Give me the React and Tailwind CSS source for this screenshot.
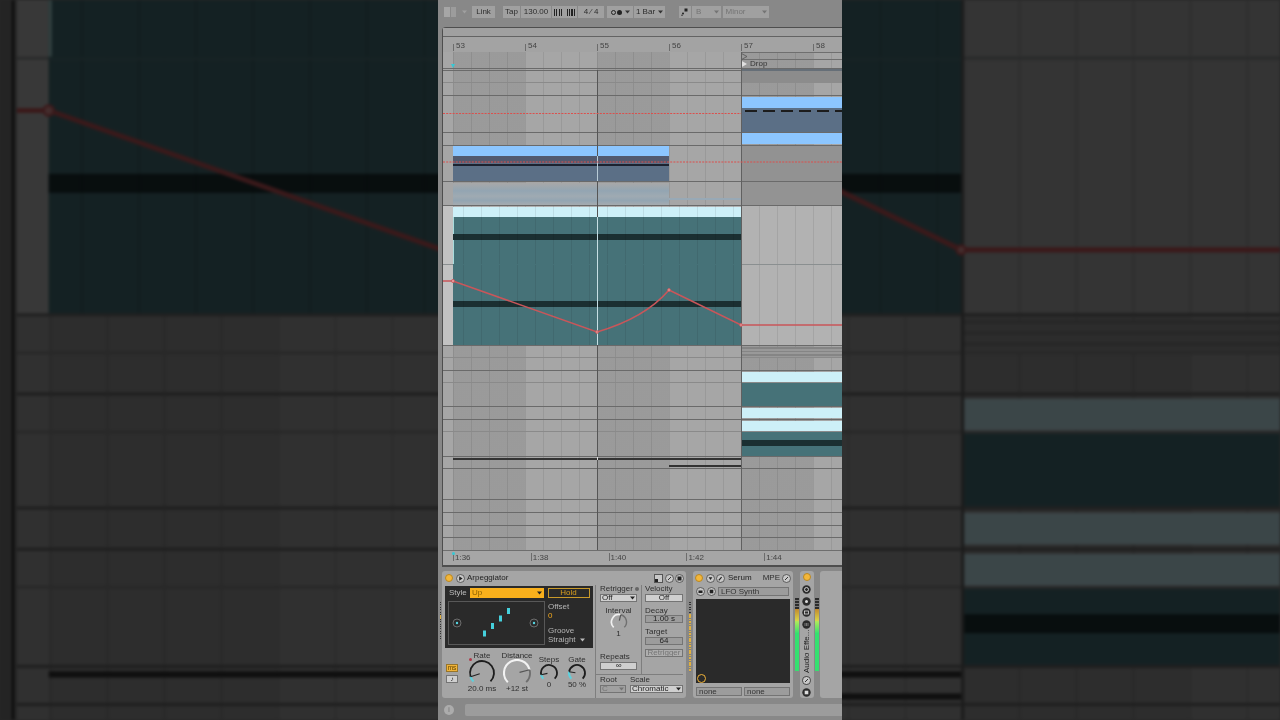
import React from "react";

const gridBg =
  "bg-[image:repeating-linear-gradient(90deg,transparent_0,transparent_10px,rgba(0,0,0,0.08)_10px,rgba(0,0,0,0.08)_11px,transparent_11px,transparent_18px),repeating-linear-gradient(90deg,transparent_0,transparent_10px,rgba(0,0,0,0.07)_10px,rgba(0,0,0,0.07)_82px,transparent_82px,transparent_144px)]";
const plainGrid =
  "bg-[image:repeating-linear-gradient(90deg,transparent_0,transparent_10px,rgba(0,0,0,0.08)_10px,rgba(0,0,0,0.08)_11px,transparent_11px,transparent_18px)]";

const S = "border-b border-[#6a6a6a]";
const L = "border-b border-[#8a8a8a]";

function Clip({ x, w, y, h, c }) {
  return <div className={`absolute ${c}`} style={{ left: x, width: w, top: y, height: h }} />;
}

const BLUE = "bg-[#8cc6ff]";
const SLATE = "bg-[#5b6f86]";
const ICE = "bg-[#cdf0f8]";
const TEAL = "bg-[#467278]";
const DARK = "bg-[#1b2f31]";

function Row({ h, line = S, light, children }) {
  return (
    <div className={`relative ${line} ${light ? `bg-[#b2b2b2] ${plainGrid}` : ""}`} style={{ height: h }}>
      {children}
    </div>
  );
}

function Rows({ backdrop }) {
  return (
    <div className={`relative w-[399px] h-[498px] bg-[#a6a6a6] ${gridBg}`}>
      <Row h={17}>
        <div className="absolute left-[298px] right-0 top-0 h-[8px] border-t border-b border-[#6f6f6f]" />
        <svg className="absolute left-[298px] top-[1px]" width="7" height="7" viewBox="0 0 7 7">
          <path d="M0.5 0.5L6 3.5L0.5 6.5Z" fill="none" stroke="#555" strokeWidth="0.8" />
        </svg>
        <svg className="absolute left-[298px] top-[8px]" width="7" height="8" viewBox="0 0 7 8">
          <path d="M0 0.5L6 4L0 7.5Z" fill="#e0e0e0" />
        </svg>
        {!backdrop && (
          <span className="absolute left-[307px] top-[7px] text-[8px] leading-[9px] text-[#333]">Drop</span>
        )}
        <div className="absolute left-[10px] top-[12px] w-0 h-0 -ml-[2px] border-l-[2.5px] border-r-[2.5px] border-t-[4px] border-l-transparent border-r-transparent border-t-[#35c9d6]" />
      </Row>
      <Row h={2}>
        <Clip x={298} w={101} y={0} h={2} c="bg-[#666f78]" />
      </Row>
      <Row h={12} line={L}>
        <Clip x={298} w={101} y={0} h={12} c="bg-[#8c8c8c]" />
      </Row>
      <Row h={13} />
      <Row h={37}>
        <Clip x={298} w={101} y={1} h={11} c={BLUE} />
        <Clip x={298} w={101} y={12} h={24} c={SLATE} />
        <div className="absolute left-[302px] right-0 top-[14px] h-[2px] bg-[repeating-linear-gradient(90deg,#1c1c1c_0,#1c1c1c_12px,transparent_12px,transparent_18px)]" />
      </Row>
      <Row h={13}>
        <Clip x={298} w={101} y={0} h={11} c={BLUE} />
      </Row>
      <Row h={36}>
        <Clip x={10} w={216} y={0} h={10} c={BLUE} />
        <Clip x={10} w={216} y={10} h={25} c={SLATE} />
        <Clip x={10} w={216} y={10} h={7} c="bg-[#525a6f]" />
        <Clip x={10} w={216} y={18} h={1.5} c="bg-[#1c2230]" />
        <Clip x={298} w={101} y={0} h={35} c="bg-[#929292]" />
      </Row>
      <Row h={24}>
        <Clip x={10} w={216} y={1} h={22} c="bg-[linear-gradient(180deg,#a8a8a8_0%,#93a5b2_35%,#9faab2_60%,#93a5b2_80%,#a5abaf_100%)]" />
        <Clip x={226} w={72} y={16} h={2} c="bg-[#98a9b6]" />
        <Clip x={298} w={101} y={0} h={23} c="bg-[#939393]" />
      </Row>
      <Row h={59} light line="border-b border-[#8a8f90]">
        <Clip x={0} w={10} y={0} h={58} c="bg-[#c2c2c2]" />
        <Clip x={10} w={288} y={1} h={10} c={ICE} />
        <Clip x={10} w={288} y={11} h={48} c={TEAL} />
        <Clip x={10} w={1} y={11} h={47} c="bg-[#a8dcdc]" />
        <Clip x={10} w={288} y={28} h={6} c={DARK} />
        <div className={`absolute left-[10px] w-[288px] top-0 h-full ${plainGrid}`} />
      </Row>
      <Row h={81} light>
        <Clip x={0} w={10} y={0} h={80} c="bg-[#c2c2c2]" />
        <Clip x={10} w={288} y={0} h={80} c={TEAL} />
        <Clip x={10} w={288} y={36} h={6} c={DARK} />
        <div className={`absolute left-[10px] w-[288px] top-0 h-[80px] ${plainGrid}`} />
      </Row>
      <Row h={12} line={L}>
        <Clip x={298} w={101} y={1} h={10} c="bg-[repeating-linear-gradient(180deg,#858585_0,#858585_1.5px,#999999_1.5px,#999999_3.5px)]" />
      </Row>
      <Row h={13} />
      <Row h={12} line={L}>
        <Clip x={298} w={101} y={1} h={10} c={ICE} />
      </Row>
      <Row h={24}>
        <Clip x={298} w={101} y={0} h={23} c={TEAL} />
      </Row>
      <Row h={13}>
        <Clip x={298} w={101} y={1} h={10} c={ICE} />
      </Row>
      <Row h={12} line={L}>
        <Clip x={298} w={101} y={1} h={10} c={ICE} />
      </Row>
      <Row h={25}>
        <Clip x={298} w={101} y={0} h={24} c={TEAL} />
        <Clip x={298} w={101} y={8} h={6} c={DARK} />
      </Row>
      <Row h={12}>
        <Clip x={10} w={288} y={1} h={2} c="bg-[#333]" />
        <Clip x={226} w={72} y={8} h={2} c="bg-[#333]" />
      </Row>
      <Row h={31} />
      <Row h={13} />
      <Row h={13} />
      <Row h={12} />
      <Row h={12} line="" />

      <div className="absolute left-[154px] top-[18px] bottom-0 w-px bg-[#555]" />
      <div className="absolute left-[298px] top-0 bottom-0 w-px bg-[#606060]" />
      <div className="absolute left-[154px] top-[104px] h-[25px] w-px bg-[#b8cbd6]" />
      <div className="absolute left-[154px] top-[165px] h-[128px] w-px bg-[#c6dfe4]" />
      <div className="absolute left-[154px] top-[405px] h-[3px] w-px bg-[#dddddd]" />

      <svg className="absolute left-0 top-0" width="399" height="498" viewBox="0 0 399 498" fill="none">
        <path d="M0 61.5H298" stroke="#dc4f4c" strokeWidth="1" strokeDasharray="2 1.2" />
        <path d="M0 110H399" stroke="#dc4f4c" strokeWidth="1" strokeDasharray="2 1.2" />
        <path d="M0 229H10L154 280Q202 266 226 238L298 273H399" stroke="#c9565a" strokeWidth="1.6" />
        <circle cx="10" cy="229" r="1.6" fill="#e79a9a" stroke="#c9565a" strokeWidth="0.8" />
        <circle cx="154" cy="280" r="1.4" fill="#e79a9a" stroke="#c9565a" strokeWidth="0.8" />
        <circle cx="226" cy="238" r="1.4" fill="#e79a9a" stroke="#c9565a" strokeWidth="0.8" />
        <circle cx="298" cy="273" r="1.4" fill="#e79a9a" stroke="#c9565a" strokeWidth="0.8" />
      </svg>
    </div>
  );
}

function TopBtn({ w, ml = 0, children, dim }) {
  return (
    <div
      className={`h-[12px] flex items-center justify-center shrink-0 bg-[#a0a0a0] text-[8px] ${dim ? "text-[#747474]" : "text-[#2c2c2c]"}`}
      style={{ width: w, marginLeft: ml }}
    >
      {children}
    </div>
  );
}

function Caret({ c = "#333", className = "" }) {
  return (
    <svg className={className} width="5" height="4" viewBox="0 0 5 4">
      <path d="M0 0.5H5L2.5 3.5Z" fill={c} />
    </svg>
  );
}

function TopBar() {
  return (
    <div className="h-[27px] flex items-center pl-[6px] pb-[3px]">
      <div className="w-[12px] h-[10px] flex gap-px shrink-0">
        <div className="flex-1 bg-[#a6a6a6]" />
        <div className="flex-1 bg-[#9c9c9c]" />
      </div>
      <Caret c="#a0a0a0" className="ml-[6px] shrink-0" />
      <TopBtn w={23} ml={5}>Link</TopBtn>
      <TopBtn w={17} ml={8}>Tap</TopBtn>
      <TopBtn w={30} ml={1}>130.00</TopBtn>
      <TopBtn w={13} ml={0.5}>
        <div className="w-[8px] h-[7px] bg-[repeating-linear-gradient(90deg,#222_0,#222_1px,transparent_1px,transparent_2.4px)]" />
      </TopBtn>
      <TopBtn w={12} ml={0.5}>
        <div className="w-[8px] h-[7px] bg-[repeating-linear-gradient(90deg,#222_0,#222_1px,transparent_1px,transparent_1.8px)]" />
      </TopBtn>
      <TopBtn w={26} ml={1}>4 ⁄ 4</TopBtn>
      <TopBtn w={26} ml={3}>
        <div className="w-[5px] h-[5px] rounded-full border border-[#222]" />
        <div className="w-[5px] h-[5px] rounded-full bg-[#222] ml-px" />
        <Caret className="ml-[3px]" />
      </TopBtn>
      <TopBtn w={31} ml={1}>
        1 Bar <Caret className="ml-[3px]" />
      </TopBtn>
      <TopBtn w={12} ml={14}>
        <svg width="8" height="8" viewBox="0 0 8 8">
          <rect x="3.5" y="0.5" width="3" height="3" fill="#222" />
          <circle cx="2" cy="5.5" r="1" fill="#222" />
          <circle cx="1" cy="7.2" r="0.7" fill="#222" />
        </svg>
      </TopBtn>
      <TopBtn w={29} ml={1} dim>
        <span className="mr-auto pl-[4px]">B</span>
        <Caret c="#747474" className="mr-[2px]" />
      </TopBtn>
      <TopBtn w={46} ml={1.5} dim>
        <span className="mr-auto pl-[3px]">Minor</span>
        <Caret c="#747474" className="mr-[2px]" />
      </TopBtn>
    </div>
  );
}

function Arrangement() {
  const bars = ["53", "54", "55", "56", "57", "58"];
  const times = ["1:36", "1:38", "1:40", "1:42", "1:44"];
  return (
    <div className="ml-[4px] h-[540px] border-l border-t border-b-2 border-[#4e4e4e] rounded-tl-[4px] bg-[#a6a6a6] flex flex-col">
      <div className="h-[9px] border-b border-[#636363] bg-[#a0a0a0]" />
      <div className="h-[15px] flex pl-[10px] items-end bg-[#a3a3a3]">
        {bars.map((b) => (
          <div key={b} className="w-[72px] shrink-0 h-[7px] border-l border-[#6c6c6c] pl-[2px] text-[8px] leading-[7px] text-[#444] mb-[1px]">
            <span className="relative -top-[2px]">{b}</span>
          </div>
        ))}
      </div>
      <Rows />
      <div className="relative flex-1 flex pl-[10px] bg-[#a6a6a6] border-t border-[#6e6e6e]">
        {times.map((t) => (
          <div key={t} className="w-[77.8px] shrink-0 h-[8px] mt-[2px] border-l border-[#6c6c6c] pl-[1px] text-[8px] leading-[9px] text-[#444]">
            {t}
          </div>
        ))}
        <div className="absolute left-[9px] top-[1px] w-[3px] h-[3px] rounded-full bg-[#35c9d6]" />
      </div>
    </div>
  );
}

function arc(c, r, a0, a1) {
  const p = (a) => [c + r * Math.cos((a * Math.PI) / 180), c + r * Math.sin((a * Math.PI) / 180)];
  const [x0, y0] = p(a0);
  const [x1, y1] = p(a1);
  return `M${x0} ${y0}A${r} ${r} 0 ${a1 - a0 > 180 ? 1 : 0} 1 ${x1} ${y1}`;
}

function Knob({ size, r, v, track = "#1d1d1d", fill = "#5fd0dc", needle = "#222", sw = 1.8 }) {
  const c = size / 2;
  const a = 135 + 270 * v;
  const rad = (a * Math.PI) / 180;
  return (
    <svg width={size} height={size} viewBox={`0 0 ${size} ${size}`} fill="none" className="shrink-0 -mt-px">
      <path d={arc(c, r, a, 405)} stroke={track} strokeWidth={sw} />
      <path d={arc(c, r, 135, a)} stroke={fill} strokeWidth={sw + 0.3} />
      <path d={`M${c + r * Math.cos(rad)} ${c + r * Math.sin(rad)}L${c + r * 0.2 * Math.cos(rad)} ${c + r * 0.2 * Math.sin(rad)}`} stroke={needle} strokeWidth="1.2" />
    </svg>
  );
}

const lab = "h-[8px] leading-[8px] text-[8px] text-[#2f2f2f] whitespace-nowrap";

function Field({ w, mt = 0, children, tone = "bg-[#cfcfcf] text-[#222]" }) {
  return (
    <div className={`h-[8px] flex items-center justify-center text-[8px] border border-[#747474] ${tone}`} style={{ width: w, marginTop: mt }}>
      {children}
    </div>
  );
}

function HeadIcon({ children, ml = 0, size = 9 }) {
  return (
    <svg width={size} height={size} viewBox="0 0 9 9" className="shrink-0" style={{ marginLeft: ml }}>
      <circle cx="4.5" cy="4.5" r="4" fill="#c8c8c8" stroke="#444" strokeWidth="0.8" />
      {children}
    </svg>
  );
}

function Power({ ml = 0 }) {
  return <div className="w-[8px] h-[8px] rounded-full bg-[#f4b73a] border border-[#b98722] shrink-0" style={{ marginLeft: ml }} />;
}

function KnobCol({ w, ml, label, value, top, children, dot }) {
  return (
    <div className="relative shrink-0 flex flex-col items-center" style={{ width: w, marginLeft: ml, paddingTop: top }}>
      <div className={lab}>{label}</div>
      {children}
      <div className={`${lab} -mt-[2px]`}>{value}</div>
      {dot}
    </div>
  );
}

function Arpeggiator() {
  return (
    <div className="w-[244px] h-[127px] shrink-0 rounded-[3px] bg-[#a5a5a5] flex flex-col">
      <div className="h-[14px] flex items-center pl-[3px] pr-[2px]">
        <Power />
        <HeadIcon ml={3}><path d="M3.2 2.3L6.6 4.5L3.2 6.7Z" fill="#222" /></HeadIcon>
        <span className="ml-[2px] text-[8px] font-medium text-[#222]">Arpeggiator</span>
        <div className="ml-auto w-[9px] h-[9px] bg-[#c8c8c8] border border-[#555] shrink-0 flex items-end">
          <div className="w-[3px] h-[3px] bg-[#222]" />
        </div>
        <HeadIcon ml={2}><path d="M3 6L6 3" stroke="#333" strokeWidth="1" /></HeadIcon>
        <HeadIcon ml={1}><rect x="2.5" y="2.5" width="4" height="4" fill="#222" /></HeadIcon>
      </div>
      <div className="flex flex-1">
        <div className="w-[148px] ml-[3px] shrink-0 flex flex-col">
          <div className="h-[62px] mt-[1px] bg-[#2a2a2a] flex flex-col">
            <div className="flex items-center mt-[2px] h-[10px]">
              <span className="w-[25px] pl-[4px] text-[8px] text-[#bdbdbd] shrink-0">Style</span>
              <div className="w-[74px] h-[10px] bg-[#f9b01c] flex items-center pl-[2px] pr-[2px] text-[8px] text-[#8a5f00] shrink-0">
                <span className="mr-auto">Up</span>
                <Caret c="#222" />
              </div>
              <div className="ml-[3.5px] w-[42px] h-[10px] border border-[#c99a2a] flex items-center justify-center text-[8px] text-[#d99f1e] shrink-0">Hold</div>
            </div>
            <div className="flex mt-[3px]">
              <svg className="ml-[3px] shrink-0" width="97" height="44" viewBox="0 0 97 44">
                <rect x="0.5" y="0.5" width="96" height="43" fill="#2a2a2a" stroke="#585858" />
                <circle cx="9" cy="22" r="4" fill="none" stroke="#7d7d7d" strokeWidth="0.8" />
                <circle cx="9" cy="22" r="1.2" fill="#55d6e2" />
                <circle cx="86" cy="22" r="4" fill="none" stroke="#7d7d7d" strokeWidth="0.8" />
                <circle cx="86" cy="22" r="1.2" fill="#55d6e2" />
                <rect x="35" y="29.5" width="3" height="6" fill="#45d0dc" />
                <rect x="43" y="22" width="3" height="6" fill="#45d0dc" />
                <rect x="51" y="14.5" width="3" height="6" fill="#45d0dc" />
                <rect x="59" y="7" width="3" height="6" fill="#45d0dc" />
              </svg>
              <div className="ml-[3px] flex flex-col text-[8px] leading-[9px] text-[#b5b5b5] w-[42px]">
                <span className="mt-[1px]">Offset</span>
                <span className="text-[#f2a81d]">0</span>
                <span className="mt-[6px]">Groove</span>
                <span className="flex items-center">
                  Straight
                  <Caret c="#bbbbbb" className="ml-[4px]" />
                </span>
              </div>
            </div>
          </div>
          <div className="flex flex-1">
            <div className="w-[13px] ml-px shrink-0 pt-[16px] flex flex-col gap-[3px]">
              <div className="h-[8px] w-[12px] bg-[#f1b43a] border border-[#97752a] text-[6.5px] leading-[6px] text-center text-[#5e4200]">ms</div>
              <div className="h-[8px] w-[12px] bg-[#cfcfcf] border border-[#747474] text-[6.5px] leading-[6px] text-center text-[#222]">♪</div>
            </div>
            <KnobCol w={30} ml={8} top={4} label="Rate" value="20.0 ms"
              dot={<div className="absolute left-[2px] top-[10px] w-[3px] h-[3px] rounded-full bg-[#b03a4a]" />}>
              <Knob size={28} r={12} v={0.1} />
            </KnobCol>
            <KnobCol w={32} ml={4} top={4} label="Distance" value="+12 st">
              <Knob size={28} r={13} v={0.78} fill="#f2f2f2" track="#6e6e6e" needle="#555" />
            </KnobCol>
            <KnobCol w={26} ml={3} top={8} label="Steps" value="0">
              <Knob size={20} r={8} v={0.12} />
            </KnobCol>
            <KnobCol w={26} ml={2} top={8} label="Gate" value="50 %">
              <Knob size={20} r={8} v={0.2} />
            </KnobCol>
          </div>
        </div>
        <div className="ml-[2px] flex-1 border-l border-[#7e7e7e] flex flex-col">
          <div className="flex h-[90px] border-b border-[#7e7e7e] mr-[3px]">
            <div className="w-[46px] pl-[4px] border-r border-[#7e7e7e] flex flex-col shrink-0">
              <div className={`${lab} flex items-center gap-[2px]`}>
                Retrigger
                <div className="w-[4px] h-[4px] rounded-full bg-[#666]" />
              </div>
              <Field w={37} mt={1}>
                <span className="mr-auto pl-[1px]">Off</span>
                <Caret c="#222" className="mr-[1px]" />
              </Field>
              <div className={`${lab} mt-[5px] text-center w-[37px]`}>Interval</div>
              <div className="w-[37px] flex justify-center -mt-[2px]">
                <Knob size={20} r={7.5} v={0.55} fill="#f0f0f0" track="#707070" needle="#555" sw={1.4} />
              </div>
              <div className={`${lab} -mt-[2px] text-center w-[37px]`}>1</div>
              <div className={`${lab} mt-[15px]`}>Repeats</div>
              <Field w={37} mt={1}>∞</Field>
            </div>
            <div className="pl-[3px] flex flex-col flex-1">
              <div className={lab}>Velocity</div>
              <Field w={38} mt={1}>Off</Field>
              <div className={`${lab} mt-[5px]`}>Decay</div>
              <Field w={38} tone="bg-[#9c9c9c] text-[#222]">1.00 s</Field>
              <div className={`${lab} mt-[5px]`}>Target</div>
              <Field w={38} mt={1} tone="bg-[#9c9c9c] text-[#222]">64</Field>
              <Field w={38} mt={4} tone="bg-[#aeaeae] text-[#747474]">Retrigger</Field>
            </div>
          </div>
          <div className="flex pl-[4px] pt-[1px] gap-[4px]">
            <div className="flex flex-col">
              <div className={lab}>Root</div>
              <Field w={26} mt={1} tone="bg-[#a0a0a0] text-[#747474]">
                <span className="mr-auto pl-[1px]">C</span>
                <Caret c="#747474" className="mr-[1px]" />
              </Field>
            </div>
            <div className="flex flex-col">
              <div className={lab}>Scale</div>
              <Field w={53} mt={1}>
                <span className="mr-auto pl-[1px]">Chromatic</span>
                <Caret c="#222" className="mr-[1px]" />
              </Field>
            </div>
          </div>
        </div>
      </div>
    </div>
  );
}

function Serum() {
  return (
    <div className="w-[100px] h-[127px] shrink-0 rounded-[3px] bg-[#a5a5a5] flex flex-col">
      <div className="h-[14px] flex items-center pl-[2px] pr-[2px]">
        <Power />
        <HeadIcon ml={3}><path d="M2.6 3.2H6.4L4.5 6Z" fill="#222" /></HeadIcon>
        <HeadIcon ml={1}><path d="M2.8 6.4L5.6 3.2" stroke="#222" strokeWidth="1.2" /></HeadIcon>
        <span className="ml-[3px] text-[8px] font-medium text-[#222]">Serum</span>
        <span className="ml-auto text-[8px] text-[#2d2d2d]">MPE</span>
        <HeadIcon ml={2}><path d="M3 6L6 3" stroke="#333" strokeWidth="1" /></HeadIcon>
      </div>
      <div className="h-[10px] mt-px flex items-center pl-[3px]">
        <HeadIcon><path d="M2.5 3.5H6.5V6H2.5Z" fill="#222" /></HeadIcon>
        <HeadIcon ml={2}><rect x="2.7" y="2.7" width="3.6" height="3.6" fill="#222" /></HeadIcon>
        <div className="ml-[2px] w-[71px] h-[9px] border border-[#747474] bg-[#9c9c9c] text-[8px] leading-[7px] pl-[2px] text-[#333]">LFO Synth</div>
      </div>
      <div className="relative mx-[3px] mt-[3px] h-[84px] bg-[#2a2a2a]">
        <div className="absolute left-[1px] bottom-0 w-[9px] h-[9px] rounded-full border-[1.5px] border-[#f1b43a]" />
      </div>
      <div className="flex mx-[3px] mt-[4px] gap-[2px]">
        <div className="w-[46px] h-[9px] border border-[#747474] bg-[#9c9c9c] text-[8px] leading-[7px] pl-[2px] text-[#333]">none</div>
        <div className="w-[46px] h-[9px] border border-[#747474] bg-[#9c9c9c] text-[8px] leading-[7px] pl-[2px] text-[#333]">none</div>
      </div>
    </div>
  );
}

function Meter() {
  return (
    <div className="w-[4px] h-[73px] mt-[27px] shrink-0 flex flex-col">
      <div className="h-[11px] bg-[repeating-linear-gradient(180deg,#2d2d2d_0,#2d2d2d_2px,#777_2px,#777_3px)]" />
      <div className="h-[12px] bg-[linear-gradient(180deg,#c28a30,#d9d64a)]" />
      <div className="flex-1 bg-[linear-gradient(180deg,#b4e85a,#35e070_25%,#35e070)]" />
    </div>
  );
}

function RackIcon({ mt = 0, children }) {
  return (
    <svg width="9" height="9" viewBox="0 0 9 9" style={{ marginTop: mt }} className="shrink-0">
      <circle cx="4.5" cy="4.5" r="4.2" fill="#2c2c2c" />
      {children}
    </svg>
  );
}

function Rack() {
  return (
    <div className="w-[13.5px] h-[127px] shrink-0 rounded-[3px] bg-[#a5a5a5] flex flex-col items-center pt-[2px]">
      <Power />
      <RackIcon mt={4}><circle cx="4.5" cy="4.5" r="2" fill="none" stroke="#ddd" strokeWidth="0.9" /></RackIcon>
      <RackIcon mt={2.5}><circle cx="4.5" cy="4.5" r="1.5" fill="#ddd" /></RackIcon>
      <RackIcon mt={2.5}><rect x="2.5" y="3" width="4" height="3" fill="none" stroke="#ddd" strokeWidth="0.8" /></RackIcon>
      <RackIcon mt={2.5}><path d="M3 3V6M4.5 3V6M6 3V6" stroke="#999" strokeWidth="0.7" /></RackIcon>
      <div className="mt-[2px] h-[42px] text-[8px] font-medium text-[#222] leading-[13px] whitespace-nowrap [writing-mode:vertical-rl] rotate-180 text-left">Audio Effe...</div>
      <RackIcon mt={3}>
        <circle cx="4.5" cy="4.5" r="4" fill="#c8c8c8" stroke="#333" strokeWidth="0.7" />
        <path d="M3 6L6 3" stroke="#333" strokeWidth="1" />
      </RackIcon>
      <RackIcon mt={3}><rect x="2.7" y="2.7" width="3.6" height="3.6" fill="#ddd" /></RackIcon>
    </div>
  );
}

function Gripper({ yellowAt, h, className = "" }) {
  return (
    <div className={`relative w-[1.5px] shrink-0 bg-[repeating-linear-gradient(180deg,#333_0,#333_1px,transparent_1px,transparent_2.4px)] ${className}`} style={{ height: h }}>
      {yellowAt.map(([t, ht], i) => (
        <div key={i} className="absolute left-0 w-full bg-[repeating-linear-gradient(180deg,#e0b040_0,#e0b040_1.6px,#7f7f7f_1.6px,#7f7f7f_2.4px)]" style={{ top: t, height: ht }} />
      ))}
    </div>
  );
}

function Devices() {
  return (
    <div className="h-[133px] flex pt-[4px] pl-[1.5px]">
      <Gripper h={38} yellowAt={[[13, 4]]} className="mt-[31px]" />
      <div className="ml-[1px]"><Arpeggiator /></div>
      <Gripper h={70} yellowAt={[[12, 58]]} className="mt-[31px] ml-[3px]" />
      <div className="ml-[2.5px]"><Serum /></div>
      <div className="ml-[2px]"><Meter /></div>
      <div className="ml-[1px]"><Rack /></div>
      <div className="ml-[1.5px]"><Meter /></div>
      <div className="ml-[0.5px] flex-1 h-[127px] rounded-l-[3px] bg-[#a5a5a5]" />
    </div>
  );
}

function StatusBar() {
  return (
    <div className="h-[20px] flex items-center pl-[6px]">
      <div className="w-[10px] h-[10px] rounded-full bg-[#acacac] flex items-center justify-center text-[7px] font-bold text-[#848484] shrink-0">i</div>
      <div className="ml-[10.5px] flex-1 h-[12px] rounded-l-[2px] bg-[#9c9c9c]" />
    </div>
  );
}

export default function App() {
  return (
    <div className="relative w-[1280px] h-[720px] overflow-hidden flex justify-center bg-[#262626] font-['Liberation_Sans',Arial,sans-serif]">
      <div className="absolute inset-0 overflow-hidden bg-[#7c7c7c] brightness-[0.29] blur-[1.5px]">
        <div className="absolute left-[12px] top-0 bottom-0 w-[2px] bg-black/80" />
        <div className="absolute left-[17px] top-[-615px] origin-top-left scale-[3.168]">
          <Rows backdrop />
        </div>
      </div>
      <div className="relative w-[404px] h-[720px] bg-[#888888] flex flex-col blur-[0.45px]">
        <TopBar />
        <Arrangement />
        <Devices />
        <StatusBar />
      </div>
    </div>
  );
}
